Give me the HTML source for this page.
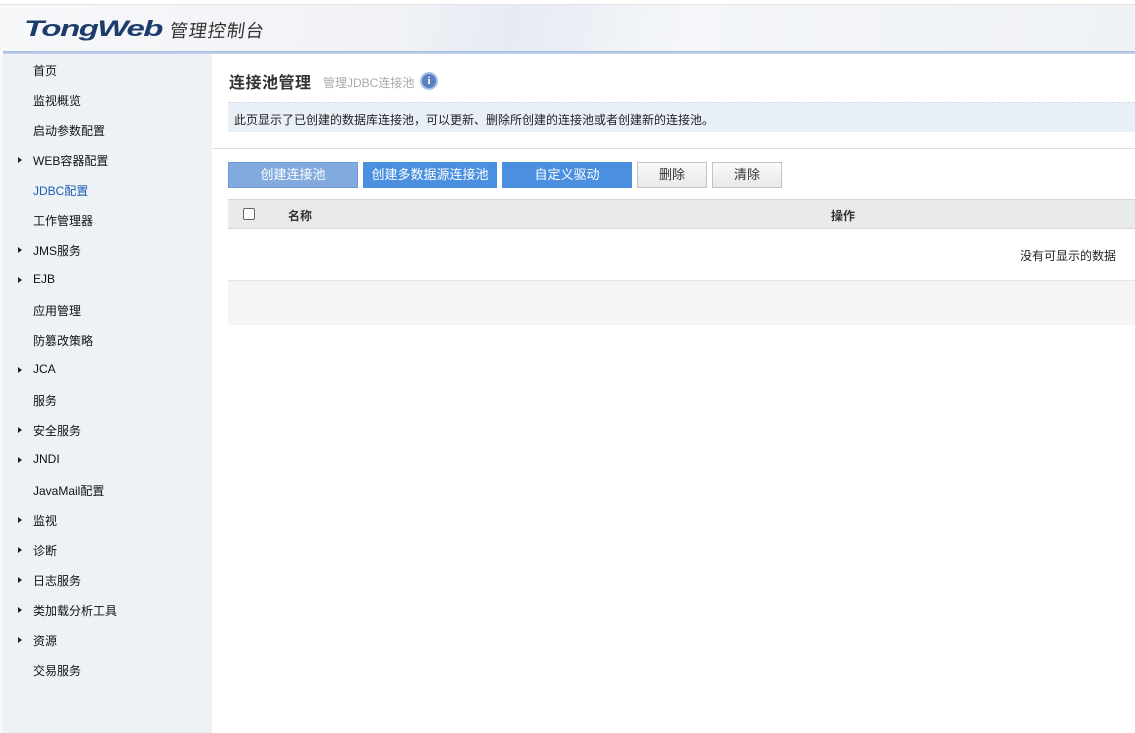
<!DOCTYPE html>
<html><head><meta charset="utf-8"><style>
*{margin:0;padding:0;box-sizing:border-box}
body{width:1135px;height:733px;overflow:hidden;background:#fff;font-family:"Liberation Sans","Noto Sans CJK SC",sans-serif;font-size:12px;color:#222;position:relative}
.hdr{position:absolute;left:0;top:0;width:1135px;height:52px;background:linear-gradient(100deg,#f7f8fa 0%,#f0f2f6 35%,#e6ebf3 45%,#f4f6f9 60%,#eef1f5 100%);border-top:4px solid #fff}
.hdr .ln{position:absolute;left:0;top:0;width:1135px;height:1px;background:#e4e4e4}
.hdrb{position:absolute;left:3px;top:51px;width:1132px;height:3px;background:linear-gradient(#9fbbe0,#c7d7ee)}
.logo1{position:absolute;left:24px;top:16px;font:italic bold 22px "Liberation Sans",sans-serif;color:#1d3c6c;letter-spacing:-1px;transform:scaleX(1.5);transform-origin:left top;line-height:26px}
.logo2{position:absolute;left:170px;top:18px;font:18px "Noto Sans CJK SC",sans-serif;color:#333;letter-spacing:1px;transform:skewX(-8deg);line-height:24px}
.side{position:absolute;left:3px;top:54px;width:209px;height:679px;background:#eef1f6}
.side div{position:absolute;left:30px;font-size:12px;color:#111}
.side div.ar::before{content:"";position:absolute;left:-15px;top:5px;border-left:4px solid #222;border-top:3px solid transparent;border-bottom:3px solid transparent}
.lborder{position:absolute;left:0;top:54px;width:3px;height:679px;background:#f8f8f8}
h1{position:absolute;left:229px;top:69px;font-size:16px;font-weight:bold;color:#333;letter-spacing:0.5px}
.sub{position:absolute;left:323px;top:74px;color:#aaa;font-size:12px}
.info{position:absolute;left:420px;top:72px;width:18px;height:18px;border-radius:50%;background:#5b7fc0;border:2px solid #aac0e4;color:#fff;font:bold 11px "Liberation Serif",serif;text-align:center;line-height:14px}
.desc{position:absolute;left:228px;top:102px;width:907px;height:30px;background:#e9eff7;border-top:1px dashed #d5dce6;padding:8px 0 0 6px;color:#222}
.sep{position:absolute;left:213px;top:148px;width:922px;height:1px;background:#ddd}
.btn{position:absolute;top:162px;height:26px;color:#fff;text-align:center;line-height:26px;font-size:13px}
.b2{position:absolute;top:162px;height:26px;background:linear-gradient(#fafafa,#e8e8e8);border:1px solid #c4c4c4;text-align:center;line-height:24px;font-size:13px;color:#333}
.th{position:absolute;left:228px;top:199px;width:907px;height:30px;background:#e9eaec;border-top:1px solid #d8d8d8;border-bottom:1px solid #d8d8d8}
.th b{position:absolute;top:7px;font-size:12px;color:#333}
.cb{position:absolute;left:243px;top:208px;width:12px;height:12px;border:1px solid #666;border-radius:2px;background:#fff}
.nodata{position:absolute;right:19px;top:247px;color:#222}
.foot{position:absolute;left:228px;top:280px;width:907px;height:45px;background:#f5f5f5;border-top:1px solid #e4e4e4}
</style></head><body>
<div class="hdr"><div class="ln"></div></div>
<div class="logo1">TongWeb</div><div class="logo2">管理控制台</div>
<div class="hdrb"></div>
<div class="lborder"></div>
<div class="side">
<div style="top:8px">首页</div>
<div style="top:38px">监视概览</div>
<div style="top:68px">启动参数配置</div>
<div class="ar" style="top:98px">WEB容器配置</div>
<div style="top:128px;color:#1a5fb4">JDBC配置</div>
<div style="top:158px">工作管理器</div>
<div class="ar" style="top:188px">JMS服务</div>
<div class="ar" style="top:218px">EJB</div>
<div style="top:248px">应用管理</div>
<div style="top:278px">防篡改策略</div>
<div class="ar" style="top:308px">JCA</div>
<div style="top:338px">服务</div>
<div class="ar" style="top:368px">安全服务</div>
<div class="ar" style="top:398px">JNDI</div>
<div style="top:428px">JavaMail配置</div>
<div class="ar" style="top:458px">监视</div>
<div class="ar" style="top:488px">诊断</div>
<div class="ar" style="top:518px">日志服务</div>
<div class="ar" style="top:548px">类加载分析工具</div>
<div class="ar" style="top:578px">资源</div>
<div style="top:608px">交易服务</div>
</div>
<h1>连接池管理</h1><div class="sub">管理JDBC连接池</div><div class="info">i</div>
<div class="desc">此页显示了已创建的数据库连接池，可以更新、删除所创建的连接池或者创建新的连接池。</div>
<div class="sep"></div>
<div class="btn" style="left:228px;width:130px;background:#82aade;border:1px solid #6d9bd8;line-height:24px">创建连接池</div>
<div class="btn" style="left:363px;width:134px;background:#4a8fe0">创建多数据源连接池</div>
<div class="btn" style="left:502px;width:130px;background:#4a8fe0">自定义驱动</div>
<div class="b2" style="left:637px;width:70px">删除</div>
<div class="b2" style="left:712px;width:70px">清除</div>
<div class="th"><b style="left:60px">名称</b><b style="left:603px">操作</b></div>
<div class="cb"></div>
<div class="nodata">没有可显示的数据</div>
<div class="foot"></div>
</body></html>
